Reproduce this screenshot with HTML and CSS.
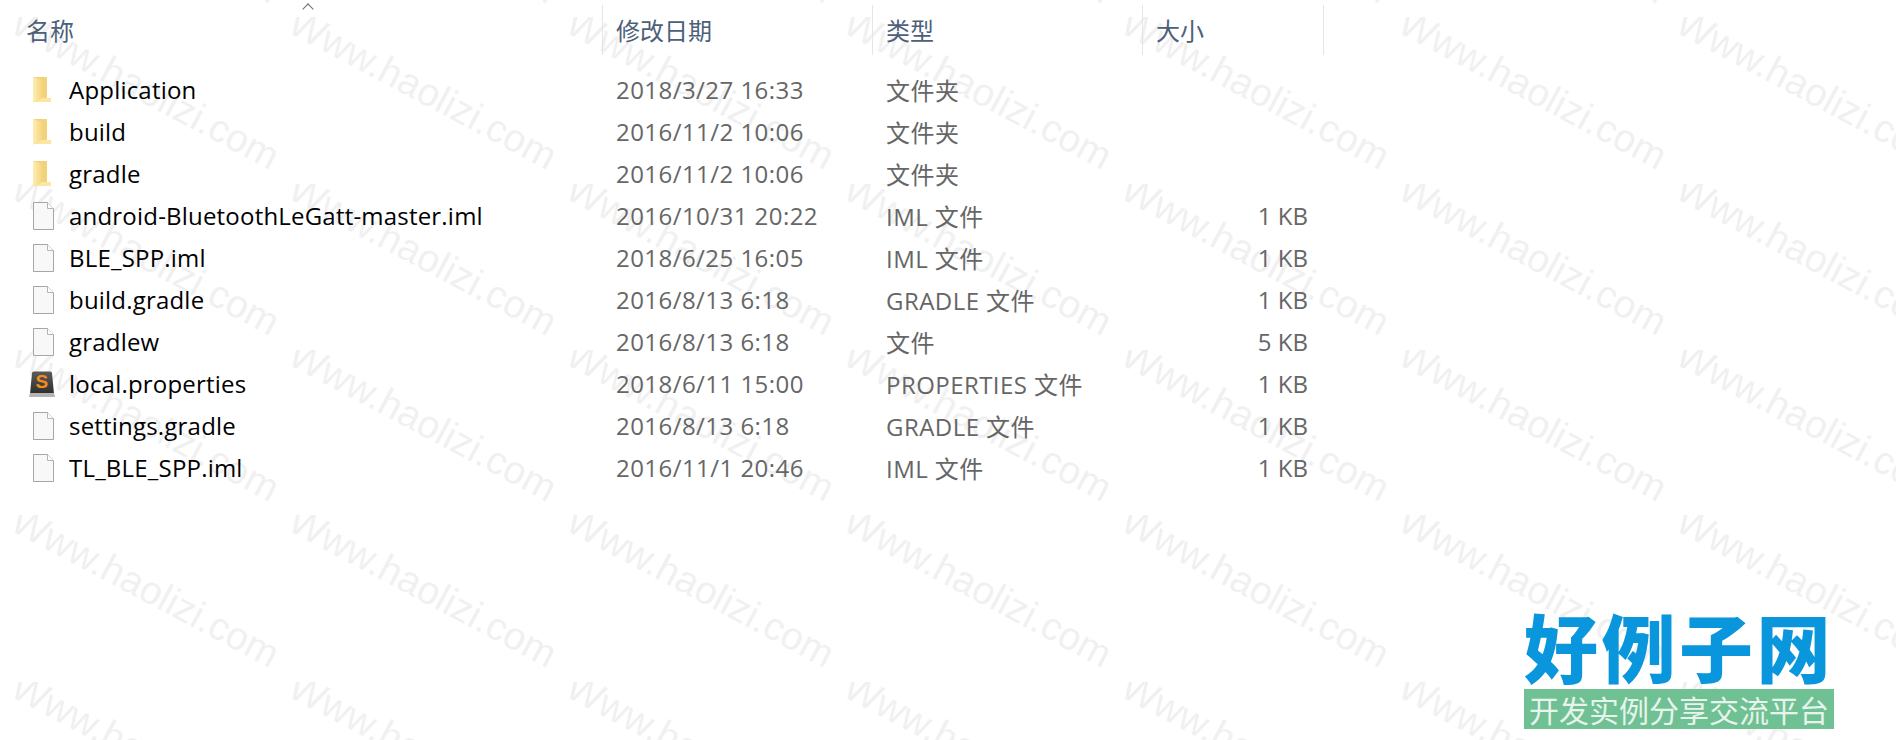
FILE: index.html
```html
<!DOCTYPE html>
<html lang="zh-CN">
<head>
    <meta charset="UTF-8">
    <title>文件列表</title>
    <link rel="stylesheet" href="styles.css">
</head>
<body>

    <!-- repeating watermark, sits behind the list -->
    <svg class="watermark" width="1896" height="740">
        <defs>
            <pattern id="wm" x="7" y="17" width="277.5" height="166" patternUnits="userSpaceOnUse">
                <text class="watermark-text" transform="translate(1 14) rotate(28)">Www.haolizi.com</text>
            </pattern>
        </defs>
        <rect width="1896" height="740" fill="url(#wm)"></rect>
    </svg>

    <svg class="icon-defs" width="0" height="0">
        <defs>
            <linearGradient id="folderFront" x1="0" y1="0" x2="1" y2="0">
                <stop offset="0" stop-color="#fdeeb5"></stop>
                <stop offset="1" stop-color="#f6d57e"></stop>
            </linearGradient>
            <symbol id="folder" viewBox="0 0 30 30">
                <path d="M7 2h14v21h4v4H7z" fill="#f3d27c"></path>
                <path d="M7 2l9 3v18l-9 5z" fill="url(#folderFront)"></path>
                <path d="M16 23h9v4H9z" fill="#fbe6a2"></path>
            </symbol>
            <symbol id="file" viewBox="0 0 30 30">
                <path d="M7.500 1.500h14l6 6v21h-20z" fill="#f8f8f8" stroke="#a6a6a6"></path>
                <path d="M21.500 1.500v6h6" fill="#fff" stroke="#b4b4b4"></path>
            </symbol>
            <linearGradient id="sublimeBody" x1="0" y1="0" x2="0" y2="1">
                <stop offset="0" stop-color="#5a5a58"></stop>
                <stop offset="1" stop-color="#2e2e2d"></stop>
            </linearGradient>
            <symbol id="sublime" viewBox="0 0 30 30">
                <path d="M4 25l2-21q0-1.500 2-1.500h16q2 0 2 1.500l2 21z" fill="url(#sublimeBody)"></path>
                <path d="M4 24h24l1 3q0 1-1 1H4q-1 0-1-1z" fill="#b5b5b5"></path>
                <text class="sublime-s" x="16" y="19">S</text>
            </symbol>
        </defs>
    </svg>

    <div class="explorer">
        <div class="list-header">
            <div class="col-head col-name">名称<span class="sort-caret"></span></div>
            <div class="col-head">修改日期</div>
            <div class="col-head">类型</div>
            <div class="col-head">大小</div>
        </div>

        <div class="file-list">
            <div class="file-row">
                <div class="name-cell"><svg class="file-icon"><use href="#folder"></use></svg>Application</div>
                <div class="meta">2018/3/27 16:33</div><div class="meta">文件夹</div><div class="meta size"></div>
            </div>
            <div class="file-row">
                <div class="name-cell"><svg class="file-icon"><use href="#folder"></use></svg>build</div>
                <div class="meta">2016/11/2 10:06</div><div class="meta">文件夹</div><div class="meta size"></div>
            </div>
            <div class="file-row">
                <div class="name-cell"><svg class="file-icon"><use href="#folder"></use></svg>gradle</div>
                <div class="meta">2016/11/2 10:06</div><div class="meta">文件夹</div><div class="meta size"></div>
            </div>
            <div class="file-row">
                <div class="name-cell"><svg class="file-icon"><use href="#file"></use></svg>android-BluetoothLeGatt-master.iml</div>
                <div class="meta">2016/10/31 20:22</div><div class="meta">IML 文件</div><div class="meta size">1 KB</div>
            </div>
            <div class="file-row">
                <div class="name-cell"><svg class="file-icon"><use href="#file"></use></svg>BLE_SPP.iml</div>
                <div class="meta">2018/6/25 16:05</div><div class="meta">IML 文件</div><div class="meta size">1 KB</div>
            </div>
            <div class="file-row">
                <div class="name-cell"><svg class="file-icon"><use href="#file"></use></svg>build.gradle</div>
                <div class="meta">2016/8/13 6:18</div><div class="meta">GRADLE 文件</div><div class="meta size">1 KB</div>
            </div>
            <div class="file-row">
                <div class="name-cell"><svg class="file-icon"><use href="#file"></use></svg>gradlew</div>
                <div class="meta">2016/8/13 6:18</div><div class="meta">文件</div><div class="meta size">5 KB</div>
            </div>
            <div class="file-row">
                <div class="name-cell"><svg class="file-icon"><use href="#sublime"></use></svg>local.properties</div>
                <div class="meta">2018/6/11 15:00</div><div class="meta">PROPERTIES 文件</div><div class="meta size">1 KB</div>
            </div>
            <div class="file-row">
                <div class="name-cell"><svg class="file-icon"><use href="#file"></use></svg>settings.gradle</div>
                <div class="meta">2016/8/13 6:18</div><div class="meta">GRADLE 文件</div><div class="meta size">1 KB</div>
            </div>
            <div class="file-row">
                <div class="name-cell"><svg class="file-icon"><use href="#file"></use></svg>TL_BLE_SPP.iml</div>
                <div class="meta">2016/11/1 20:46</div><div class="meta">IML 文件</div><div class="meta size">1 KB</div>
            </div>
        </div>
    </div>

    <!-- site stamp in the corner -->
    <div class="stamp">
        <div class="stamp-title">好例子网</div>
        <div class="stamp-bar">开发实例分享交流平台</div>
    </div>

</body>
</html>
```

FILE: styles.css
```css
/* Page */
body {
    margin: 0;
    width: 1896px;
    height: 740px;
    overflow: hidden;
    position: relative;
    background-color: white;
    font-family: "Open Sans", "Noto Sans CJK SC", sans-serif;
    font-size: 24px;
}

.watermark {
    position: absolute;
    top: 0;
    left: 0;
}

.watermark-text {
    font-family: "Liberation Sans", sans-serif;
    font-size: 39px;
    fill: #f0f0f0;
}

.icon-defs {
    position: absolute;
}

.explorer {
    position: relative;
}

/* Column header */
.list-header,
.file-row {
    display: grid;
    grid-template-columns: 603px 270px 270px 181px;
    width: 1324px;
}

.list-header {
    height: 50px;
    padding-top: 5px;
    margin-bottom: 14px;
}

.col-head {
    position: relative;
    display: flex;
    align-items: center;
    padding-left: 13px;
    padding-bottom: 2px;
    color: #4c607a;
    border-right: 1px solid #e5e5e5;
}

.col-name {
    padding-left: 26px;
}

.sort-caret {
    position: absolute;
    left: 304px;
    top: 0;
    width: 7px;
    height: 7px;
    border-left: 1px solid #6d6d6d;
    border-top: 1px solid #6d6d6d;
    transform: rotate(45deg);
}

/* File rows */
.file-row {
    box-sizing: border-box;
    height: 42px;
    padding-bottom: 2px;
    align-items: center;
}

.name-cell {
    display: flex;
    align-items: center;
    gap: 13px;
    padding-left: 26px;
    color: black;
    letter-spacing: 0.2px;
    white-space: nowrap;
}

.file-icon {
    width: 30px;
    height: 30px;
    margin-top: 2px;
    flex-shrink: 0;
}

.meta {
    padding-left: 13px;
    color: #666666;
    letter-spacing: 0.45px;
    white-space: nowrap;
}

.size {
    padding-left: 0;
    padding-right: 16px;
    text-align: right;
    letter-spacing: 0;
}

.sublime-s {
    font-family: "Liberation Sans", sans-serif;
    font-size: 19px;
    font-weight: bold;
    fill: #f58a1f;
    text-anchor: middle;
}

/* Stamp */
.stamp {
    position: absolute;
    left: 1524px;
    top: 600px;
    width: 310px;
}

.stamp-title {
    font-family: "Noto Sans CJK SC", sans-serif;
    font-size: 74px;
    font-weight: 900;
    line-height: 89px;
    letter-spacing: 3.5px;
    color: #0a96dc;
    white-space: nowrap;
}

.stamp-bar {
    height: 40px;
    line-height: 40px;
    text-align: center;
    font-family: "Noto Sans CJK SC", sans-serif;
    font-size: 30px;
    color: #e6f4ec;
    background-color: #6fc092;
    white-space: nowrap;
}
```
